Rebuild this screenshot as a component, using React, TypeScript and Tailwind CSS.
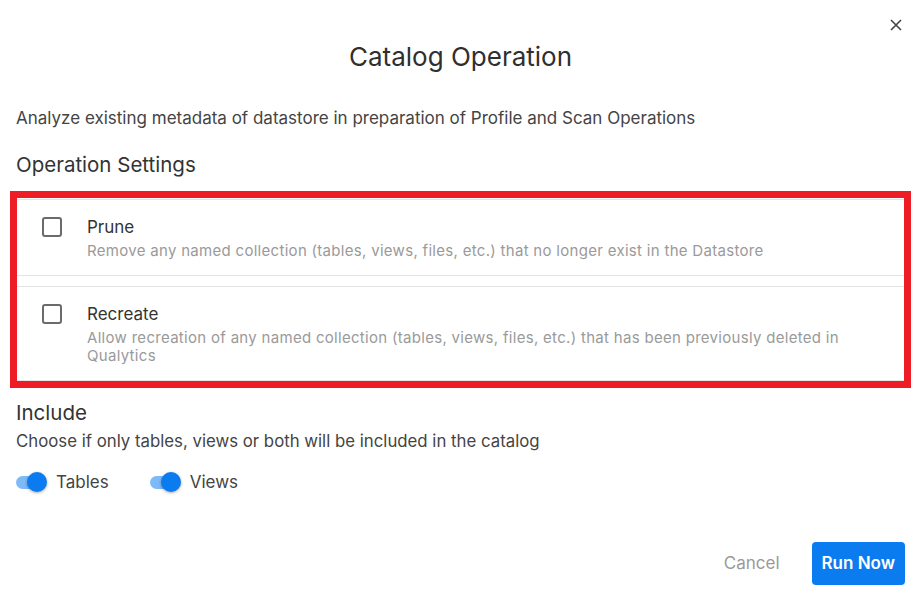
import React, { useState } from 'react';

const font = { fontFamily: 'Inter, "Noto Sans", sans-serif' };

interface OptionProps {
    title: string;
    description: string;
    checked: boolean;
    onToggle: () => void;
    className?: string;
}

const OptionCard: React.FC<OptionProps> = ({ title, description, checked, onToggle, className }) => (
    <div className={`flex items-start border-y border-[#e4e4e4] bg-white pl-[25px] pr-6 pt-[16px] ${className ?? ''}`}>
        <button
            type="button"
            onClick={onToggle}
            className={`mt-[1px] flex h-[20px] w-[20px] shrink-0 items-center justify-center rounded-[3px] border-2 ${checked ? 'border-[#0b7bf0] bg-[#0b7bf0]' : 'border-[#6b6b6b] bg-white'}`}
        >
            {checked && (
                <svg viewBox="0 0 24 24" className="h-4 w-4" fill="none" stroke="white" strokeWidth="3">
                    <path d="M5 12l5 5 9-10" />
                </svg>
            )}
        </button>
        <div className="ml-[25px]">
            <div className="text-[17px] leading-[22px] text-[#333]">{title}</div>
            <div className="mt-[4px] text-[15px] leading-[18px] tracking-[0.3px] text-[#9a9a9a]">{description}</div>
        </div>
    </div>
);

const Toggle: React.FC<{ label: string; on: boolean; onChange: () => void }> = ({ label, on, onChange }) => (
    <button type="button" onClick={onChange} className="flex items-center">
        <span className="relative flex h-[20px] w-[30px] items-center">
            <span className={`h-[13px] w-[28px] rounded-full ${on ? 'bg-[#7dbaf7]' : 'bg-[#c4c4c4]'}`} />
            <span
                className={`absolute top-0 h-[20px] w-[20px] rounded-full shadow-[0_1px_3px_rgba(0,0,0,0.35)] ${on ? 'left-[11px] bg-[#0b7bf0]' : 'left-[-2px] bg-white'}`}
            />
        </span>
        <span className="ml-[10px] text-[17px] leading-6 text-[#444]">{label}</span>
    </button>
);

export default function App() {
    const [prune, setPrune] = useState(false);
    const [recreate, setRecreate] = useState(false);
    const [tables, setTables] = useState(true);
    const [views, setViews] = useState(true);

    return (
        <div style={font} className="h-[613px] w-[921px] bg-white px-4 text-[#333]">
            <div className="flex justify-end pt-[18px] pr-[2px]">
                <button type="button" className="text-[#444]">
                    <svg viewBox="0 0 14 14" className="h-[14px] w-[14px]" fill="none" stroke="currentColor" strokeWidth="1.6">
                        <path d="M2 2l10 10M12 2L2 12" />
                    </svg>
                </button>
            </div>

            <h2 className="mt-[9px] text-center text-[26px] leading-8 text-[#2f2f2f]">Catalog Operation</h2>

            <p className="mt-[33px] text-[17px] leading-6 text-[#444]">
                Analyze existing metadata of datastore in preparation of Profile and Scan Operations
            </p>

            <h3 className="mt-[21px] text-[20.5px] leading-7 text-[#333]">Operation Settings</h3>

            <div className="-mx-[6px] mt-[12px] border-[7px] border-[#ee1c25] bg-white pt-[1px]">
                <OptionCard
                    className="pb-[15px]"
                    title="Prune"
                    description="Remove any named collection (tables, views, files, etc.) that no longer exist in the Datastore"
                    checked={prune}
                    onToggle={() => setPrune(!prune)}
                />
                <OptionCard
                    className="mt-[10px] pb-[15px]"
                    title="Recreate"
                    description="Allow recreation of any named collection (tables, views, files, etc.) that has been previously deleted in Qualytics"
                    checked={recreate}
                    onToggle={() => setRecreate(!recreate)}
                />
            </div>

            <h3 className="mt-[11px] text-[20.5px] leading-7 text-[#333]">Include</h3>
            <p className="mt-[2px] text-[16.8px] leading-6 text-[#444]">
                Choose if only tables, views or both will be included in the catalog
            </p>

            <div className="mt-[17px] flex items-center gap-[41px]">
                <Toggle label="Tables" on={tables} onChange={() => setTables(!tables)} />
                <Toggle label="Views" on={views} onChange={() => setViews(!views)} />
            </div>

            <div className="mt-[48px] flex items-center justify-end gap-[32px]">
                <button type="button" className="text-[17px] text-[#9a9a9a]">Cancel</button>
                <button type="button" className="h-[43px] rounded-[4px] bg-[#0b7bf0] px-[10px] text-[17px] font-semibold text-white">
                    Run Now
                </button>
            </div>
        </div>
    );
}
